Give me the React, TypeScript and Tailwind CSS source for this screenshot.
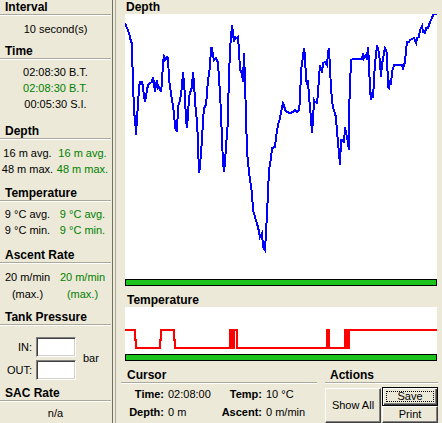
import React from "react";

const depthPts: [number, number][] = [
  [125,23],[127,28],[128,30],[130,37],[131,42],[132,43],[132,53],[133,80],[134,113],[135,118],[136,133],[136,135],[137,117],[138,105],[139,87],[140,82],[142,82],[143,87],[144,97],[145,100],[146,97],[147,90],[148,85],[150,83],[152,82],[153,77],[154,83],[155,92],[156,85],[157,80],[158,88],[159,87],[161,92],[162,82],[163,62],[164,57],[165,60],[167,57],[168,58],[169,78],[170,87],[172,100],[174,113],[175,127],[176,130],[177,132],[178,107],[180,100],[182,87],[183,72],[184,83],[185,97],[186,120],[187,128],[188,115],[189,97],[190,93],[192,87],[193,72],[194,83],[195,100],[196,113],[197,120],[198,143],[199,173],[200,167],[201,152],[202,140],[203,120],[204,108],[206,105],[207,93],[208,80],[210,67],[211,48],[212,48],[213,55],[214,60],[216,58],[217,60],[218,63],[220,93],[221,113],[222,140],[223,162],[224,172],[225,162],[226,147],[228,120],[228,110],[229,77],[230,50],[232,25],[233,33],[234,42],[235,37],[237,38],[238,37],[239,50],[240,70],[242,73],[243,82],[244,53],[245,80],[246,117],[247,150],[248,163],[250,180],[252,193],[253,210],[255,217],[258,227],[260,237],[262,233],[263,247],[265,250],[266,233],[267,213],[268,193],[269,170],[271,158],[272,148],[275,147],[276,137],[278,125],[280,118],[282,107],[283,103],[284,105],[285,110],[287,112],[290,113],[293,112],[295,110],[297,112],[299,110],[300,100],[301,70],[303,57],[304,48],[305,55],[306,80],[307,83],[308,80],[309,97],[311,118],[312,133],[313,120],[314,100],[315,102],[317,103],[318,93],[319,77],[320,65],[322,73],[323,63],[325,62],[327,65],[328,53],[329,48],[330,68],[331,88],[332,100],[333,107],[336,117],[337,132],[338,142],[339,153],[340,165],[341,140],[343,140],[344,143],[345,127],[347,137],[348,143],[349,150],[349,112],[350,87],[351,60],[353,59],[362,59],[363,53],[364,58],[366,55],[367,60],[368,47],[369,63],[370,90],[371,100],[372,95],[373,98],[375,63],[376,55],[377,45],[379,53],[380,63],[381,77],[382,63],[383,60],[384,52],[385,48],[387,53],[388,87],[389,88],[390,80],[391,85],[392,72],[394,65],[402,65],[403,68],[405,62],[406,50],[407,42],[409,42],[410,40],[414,38],[416,43],[417,38],[419,37],[420,30],[422,26],[423,32],[425,33],[426,28],[428,28],[430,22],[432,18],[433,15],[434,14],[437,14],
];

const tempPath =
  "M125 330 H135 V340 H136 V348 H160 V340 H161 V330 H174 V340 H175 V348 H230 V330 H232 V348 H234 V330 H237 V348 H327 V330 H329 V348 H345 V330 H346.5 V348 H349 V330 H437";

function SideHeader({ children, className = "" }: { children: React.ReactNode; className?: string }) {
  return (
    <div
      className={
        "h-[15px] leading-[14px] pl-[5px] font-bold text-[12px] border-b border-[#aca899] shadow-[0_1px_0_#ffffff] " +
        className
      }
    >
      {children}
    </div>
  );
}

function TwoCol({ a, b, h16 = true }: { a: string; b: string; h16?: boolean }) {
  return (
    <div className={h16 ? "flex h-[16px] leading-[16px]" : "flex h-[17px] leading-[17px]"}>
      <div className="w-[55px] text-center whitespace-nowrap">{a}</div>
      <div className="w-[55px] text-center whitespace-nowrap text-[#008000]">{b}</div>
    </div>
  );
}

function TextBox() {
  return (
    <div className="ml-[4px] w-[40px] h-[20px] bg-white border border-t-[#808080] border-l-[#808080] border-r-white border-b-white shadow-[inset_1px_1px_0_#404040,inset_-1px_-1px_0_#d4d0c8]" />
  );
}

export default function App() {
  return (
    <div className="w-[442px] h-[423px] flex bg-[#ece9d8] overflow-hidden font-['Liberation_Sans',Arial,sans-serif] text-[11px] text-black">
      {/* Sidebar */}
      <div className="w-[113px] h-full border-r border-[#716f64] pr-[1px] flex flex-col">
        <SideHeader>Interval</SideHeader>
        <div className="h-[29px] flex items-center justify-center">10 second(s)</div>

        <SideHeader>Time</SideHeader>
        <div className="pt-[5px]">
          <div className="h-[16px] leading-[16px] text-center">02:08:30 B.T.</div>
          <div className="h-[16px] leading-[16px] text-center text-[#008000]">02:08:30 B.T.</div>
          <div className="h-[16px] leading-[16px] text-center">00:05:30 S.I.</div>
        </div>

        <SideHeader className="mt-[12px]">Depth</SideHeader>
        <div className="pt-[6px]">
          <TwoCol a="16 m avg." b="16 m avg." />
          <TwoCol a="48 m max." b="48 m max." />
        </div>

        <SideHeader className="mt-[9px]">Temperature</SideHeader>
        <div className="pt-[5px]">
          <TwoCol a="9 °C avg." b="9 °C avg." />
          <TwoCol a="9 °C min." b="9 °C min." />
        </div>

        <SideHeader className="mt-[10px]">Ascent Rate</SideHeader>
        <div className="pt-[6px]">
          <TwoCol a="20 m/min" b="20 m/min" h16={false} />
          <TwoCol a="(max.)" b="(max.)" h16={false} />
        </div>

        <SideHeader className="mt-[7px]">Tank Pressure</SideHeader>
        <div className="pt-[12px] flex items-center">
          <div className="flex flex-col w-[76px]">
            <div className="flex items-center h-[20px]">
              <span className="w-[32px] text-right">IN:</span>
              <TextBox />
            </div>
            <div className="flex items-center h-[20px] mt-[3px]">
              <span className="w-[32px] text-right">OUT:</span>
              <TextBox />
            </div>
          </div>
          <span className="ml-[7px]">bar</span>
        </div>

        <SideHeader className="mt-[6px]">SAC Rate</SideHeader>
        <div className="flex-1 flex items-center justify-center pt-[3px]">n/a</div>
      </div>

      {/* Splitter */}
      <div className="w-[3px] h-full border-r border-[#aca899]" />

      {/* Right panel */}
      <div className="flex-1 h-full flex flex-col pl-[9px] pr-[5px]">
        <div className="h-[14px] leading-[14px] font-bold text-[12px] pl-[1px]">Depth</div>
        <div className="h-[265px] bg-white">
          <svg width="312" height="265" viewBox="125 14 312 265" shapeRendering="crispEdges">
            <polyline
              points={depthPts.map((p) => p.join(",")).join(" ")}
              fill="none"
              stroke="#0000ff"
              strokeWidth="2"
              strokeLinejoin="miter"
            />
          </svg>
        </div>
        <div className="h-[7px] bg-[#1cc31c] border border-black" />

        <div className="mt-[7px] h-[14px] leading-[14px] font-bold text-[12px] pl-[2px]">Temperature</div>
        <div className="h-[47px] bg-white">
          <svg width="312" height="47" viewBox="125 307 312 47" shapeRendering="crispEdges">
            <path d={tempPath} fill="none" stroke="#ff0000" strokeWidth="2" />
          </svg>
        </div>
        <div className="h-[7px] bg-[#1cc31c] border border-black" />

        {/* Bottom */}
        <div className="flex-1 flex -ml-[4px] -mr-[1px]">
          <div className="w-[196px] flex flex-col">
            <div className="mt-[7px] h-[15px] leading-[14px] pl-[6px] font-bold text-[12px] border-b border-[#aca899] shadow-[0_1px_0_#ffffff]">
              Cursor
            </div>
            <div className="mt-[2px] flex h-[18px] leading-[18px] whitespace-nowrap">
              <span className="w-[43px] text-right font-bold">Time:</span>
              <span className="ml-[4px] w-[50px]">02:08:00</span>
              <span className="w-[44px] text-right font-bold">Temp:</span>
              <span className="ml-[4px]">10 °C</span>
            </div>
            <div className="flex h-[18px] leading-[18px] whitespace-nowrap">
              <span className="w-[43px] text-right font-bold">Depth:</span>
              <span className="ml-[4px] w-[50px]">0 m</span>
              <span className="w-[44px] text-right font-bold">Ascent:</span>
              <span className="ml-[4px]">0 m/min</span>
            </div>
          </div>

          <div className="ml-[8px] w-[113px] flex flex-col">
            <div className="mt-[7px] h-[15px] leading-[14px] pl-[5px] font-bold text-[12px] border-b border-[#aca899] shadow-[0_1px_0_#ffffff]">
              Actions
            </div>
            <div className="mt-[5px] flex">
              <div className="w-[56px] h-[35px] flex items-center justify-center bg-[#ece9d8] border border-t-white border-l-white border-r-[#404040] border-b-[#404040] shadow-[inset_-1px_-1px_0_#808080]">
                Show All
              </div>
              <div className="ml-[1px] w-[56px] -mt-[1px] flex flex-col">
                <div className="h-[19px] flex p-[3px] bg-[#ece9d8] border border-black shadow-[inset_1px_1px_0_#ffffff,inset_-1px_-1px_0_#404040,inset_-2px_-2px_0_#808080]">
                  <div className="flex-1 flex items-center justify-center border border-dotted border-black leading-[11px]">
                    Save
                  </div>
                </div>
                <div className="h-[17px] flex items-center justify-center bg-[#ece9d8] border border-t-white border-l-white border-r-[#404040] border-b-[#404040] shadow-[inset_-1px_-1px_0_#808080]">
                  Print
                </div>
              </div>
            </div>
          </div>
        </div>
      </div>
    </div>
  );
}
